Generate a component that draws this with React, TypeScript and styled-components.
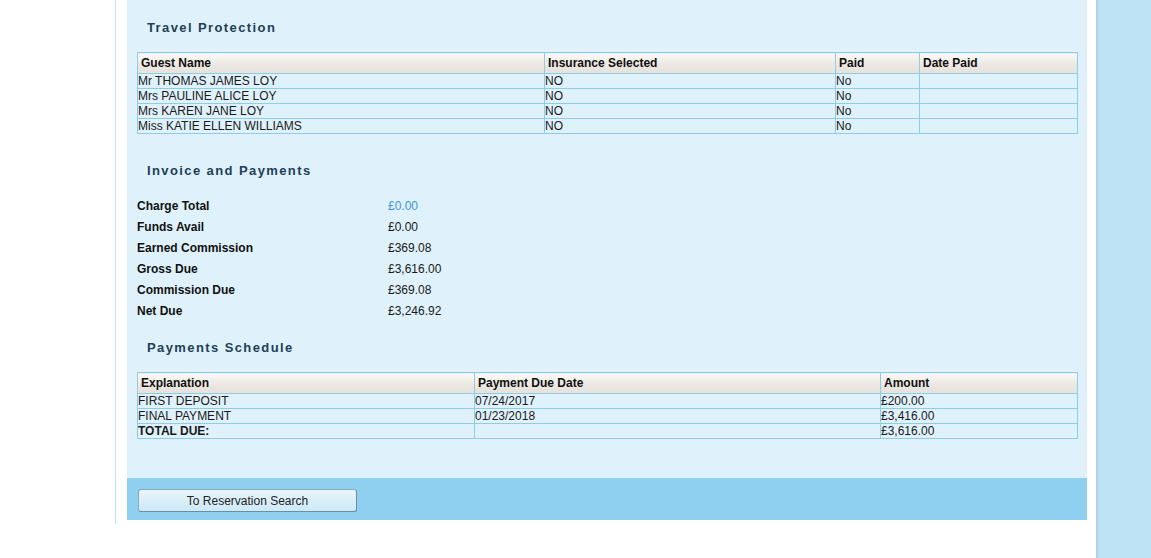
import React from "react"
import styled, { createGlobalStyle } from "styled-components"

const GlobalStyle = createGlobalStyle`
	html, body {
		margin: 0;
		padding: 0;
		background: #ffffff;
	}
	body {
		font-family: "Liberation Sans", Arial, sans-serif;
		font-size: 12px;
		color: #1a1a1a;
	}
`

const Page = styled.div`
	display: flex;
	height: 558px;
	overflow: hidden;
`

const Gutter = styled.div`
	width: 115px;
	flex-shrink: 0;
`

const Wrapper = styled.div`
	height: 524px;
	border-left: 1px solid #bfe2f7;
	padding-left: 11px;
	flex-shrink: 0;
	display: flex;
	flex-direction: column;
`

const Panel = styled.div`
	width: 940px;
	height: 478px;
	padding: 0 10px;
	background: #dff1fb;
`

const Footer = styled.div`
	width: 960px;
	height: 42px;
	padding: 11px 0 0 11px;
	box-sizing: border-box;
	background: #8fcfef;
`

const Spacer = styled.div`
	width: 9px;
	flex-shrink: 0;
`

const Sidebar = styled.div`
	flex: 1;
	background: linear-gradient(to right, #a9cbdd 0, #b7dcef 2px, #bee3f4 4px);
`

const Heading = styled.h2<{ $top: number }>`
	margin: ${(p) => p.$top}px 0 16px 0;
	padding-left: 10px;
	font-size: 13px;
	line-height: 16px;
	font-weight: bold;
	letter-spacing: 1.4px;
	color: #213f57;
`

const Table = styled.table`
	width: 940px;
	border-collapse: collapse;
	table-layout: fixed;
	border: 1px solid #8ccdee;
`

const Col = styled.col<{ $w: number }>`
	width: ${(p) => p.$w}px;
`

const HeadCell = styled.th`
	padding: 0 0 0 3px;
	height: 20px;
	line-height: 20px;
	text-align: left;
	font-weight: bold;
	font-size: 12px;
	color: #111;
	border: 1px solid #8ccdee;
	background: linear-gradient(to bottom, #fbfaf8 0%, #ece8e2 55%, #e6e1d9 100%);
	overflow: hidden;
	white-space: nowrap;
`

const Cell = styled.td<{ $bold?: boolean }>`
	padding: 0;
	height: 14px;
	line-height: 14px;
	font-size: 12px;
	font-weight: ${(p) => (p.$bold ? "bold" : "normal")};
	color: #1a1a1a;
	border: 1px solid #8ccdee;
	white-space: nowrap;
	overflow: hidden;
`

const Summary = styled.div`
	display: grid;
	grid-template-columns: 251px 1fr;
	grid-auto-rows: 21px;
	align-items: center;
`

const SummaryLabel = styled.div`
	font-weight: bold;
	font-size: 12px;
	color: #111;
`

const SummaryValue = styled.div<{ $accent?: boolean }>`
	font-size: 12px;
	color: ${(p) => (p.$accent ? "#4197da" : "#1a1a1a")};
`

const Button = styled.button`
	width: 219px;
	height: 23px;
	padding: 0;
	font-family: "Liberation Sans", Arial, sans-serif;
	font-size: 12px;
	line-height: 20px;
	color: #222;
	border: 1px solid #8aa9bd;
	border-right-color: #6f8ea3;
	border-bottom-color: #6f8ea3;
	border-radius: 3px;
	background: linear-gradient(to bottom, #e8f5fc 0%, #cde9f7 100%);
	cursor: pointer;
`

const guests = [
	"Mr THOMAS JAMES LOY",
	"Mrs PAULINE ALICE LOY",
	"Mrs KAREN JANE LOY",
	"Miss KATIE ELLEN WILLIAMS",
]

const summary = [
	{ label: "Charge Total", value: "£0.00", accent: true },
	{ label: "Funds Avail", value: "£0.00" },
	{ label: "Earned Commission", value: "£369.08" },
	{ label: "Gross Due", value: "£3,616.00" },
	{ label: "Commission Due", value: "£369.08" },
	{ label: "Net Due", value: "£3,246.92" },
]

const schedule = [
	{ explanation: "FIRST DEPOSIT", date: "07/24/2017", amount: "£200.00" },
	{ explanation: "FINAL PAYMENT", date: "01/23/2018", amount: "£3,416.00" },
]

export default function App() {
	return (
		<>
			<GlobalStyle />
			<Page>
				<Gutter />
				<Wrapper>
					<Panel>
						<Heading $top={20}>Travel Protection</Heading>
						<Table>
							<colgroup>
								<Col $w={407} />
								<Col $w={291} />
								<Col $w={84} />
								<Col $w={158} />
							</colgroup>
							<thead>
								<tr>
									<HeadCell>Guest Name</HeadCell>
									<HeadCell>Insurance Selected</HeadCell>
									<HeadCell>Paid</HeadCell>
									<HeadCell>Date Paid</HeadCell>
								</tr>
							</thead>
							<tbody>
								{guests.map((g) => (
									<tr key={g}>
										<Cell>{g}</Cell>
										<Cell>NO</Cell>
										<Cell>No</Cell>
										<Cell></Cell>
									</tr>
								))}
							</tbody>
						</Table>

						<Heading $top={29}>Invoice and Payments</Heading>
						<Summary>
							{summary.map((s) => (
								<React.Fragment key={s.label}>
									<SummaryLabel>{s.label}</SummaryLabel>
									<SummaryValue $accent={s.accent}>{s.value}</SummaryValue>
								</React.Fragment>
							))}
						</Summary>

						<Heading $top={19}>Payments Schedule</Heading>
						<Table>
							<colgroup>
								<Col $w={337} />
								<Col $w={406} />
								<Col $w={197} />
							</colgroup>
							<thead>
								<tr>
									<HeadCell>Explanation</HeadCell>
									<HeadCell>Payment Due Date</HeadCell>
									<HeadCell>Amount</HeadCell>
								</tr>
							</thead>
							<tbody>
								{schedule.map((r) => (
									<tr key={r.explanation}>
										<Cell>{r.explanation}</Cell>
										<Cell>{r.date}</Cell>
										<Cell>{r.amount}</Cell>
									</tr>
								))}
								<tr>
									<Cell $bold>TOTAL DUE:</Cell>
									<Cell></Cell>
									<Cell>£3,616.00</Cell>
								</tr>
							</tbody>
						</Table>
					</Panel>
					<Footer>
						<Button>To Reservation Search</Button>
					</Footer>
				</Wrapper>
				<Spacer />
				<Sidebar />
			</Page>
		</>
	)
}
